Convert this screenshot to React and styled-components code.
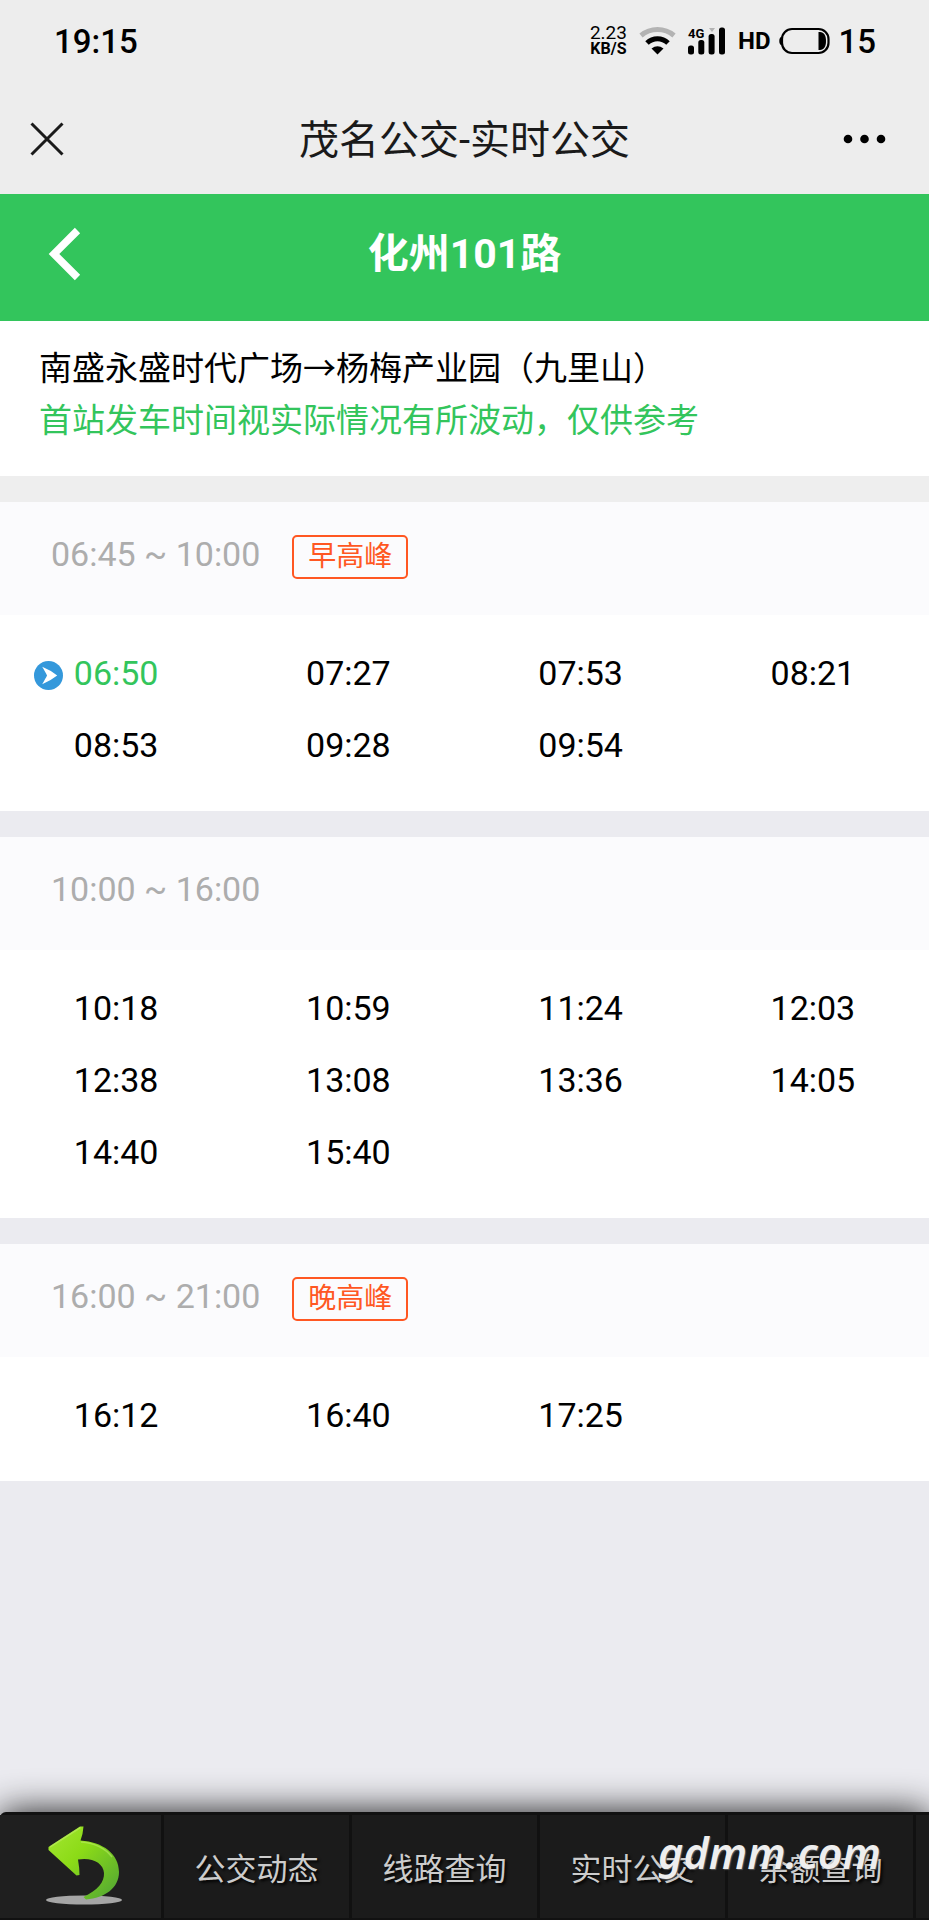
// react 관련 라이브러리
import React from 'react';
import styled, { createGlobalStyle, css } from 'styled-components';

// style 관련
const color = {
  green: '#33c55c',
  orange: '#ff5722',
  blue: '#3498db',
  bar: '#ededed',
  page: '#ebebf0',
  head: '#fbfbfd',
  gray: '#adadad',
  nav: '#1b1b1b',
  navLine: '#111111',
};

const GlobalStyle = createGlobalStyle`
  * {
    box-sizing: border-box;
  }
  body {
    margin: 0;
    background-color: ${color.page};
    color: #000;
    font-family: Roboto, 'Noto Sans CJK SC', sans-serif;
  }
  button {
    padding: 0;
    border: 0;
    background: none;
    cursor: pointer;
  }
  svg {
    display: block;
    overflow: visible;
  }
`;

const vCenter = css`
  display: flex;
  align-items: center;
`;

const Page = styled.div`
  display: flex;
  flex-direction: column;
  min-height: 100vh;
  overflow: hidden;
`;

// status bar
const StatusBar = styled.div`
  ${vCenter}
  justify-content: space-between;
  height: 84px;
  padding: 0 53px 2px 54px;
  background-color: ${color.bar};
  font-size: 33px;
  font-weight: 500;
`;

const StatusIcons = styled.div`
  ${vCenter}
  gap: 12px;
`;

const Speed = styled.div`
  font-size: 19px;
  font-weight: 400;
  line-height: 16px;
  text-align: center;

  strong {
    display: block;
    font-size: 16px;
    font-weight: 700;
    line-height: 16px;
  }
`;

const Hd = styled.span`
  font-family: 'Liberation Sans Narrow', Roboto, sans-serif;
  font-size: 24px;
  font-weight: 700;
`;

const Battery = styled.span`
  ${vCenter}
  gap: 8px;
`;

// title bar
const TitleBar = styled.header`
  display: grid;
  grid-template-columns: 1fr auto 1fr;
  align-items: center;
  height: 110px;
  padding: 0 42px 0 30px;
  background-color: ${color.bar};
  color: #1a1a1a;

  button:last-child {
    justify-self: end;
  }
`;

const AppTitle = styled.div`
  padding: 4px 0 0 12px;
  font-size: 40px;
  line-height: 56px;
`;

// line header
const LineHeader = styled.div`
  display: grid;
  grid-template-columns: 1fr auto 1fr;
  align-items: center;
  height: 127px;
  padding: 0 48px 8px;
  background-color: ${color.green};
  color: #fff;
`;

const LineTitle = styled.h1`
  margin: 0;
  font-size: 41px;
  font-weight: 700;
  line-height: 60px;
`;

const RouteInfo = styled.div`
  padding: 22px 39px 29px;
  border-bottom: 26px solid #eee;
  background-color: #fff;
  font-size: 33px;
  line-height: 52px;
  box-sizing: content-box;

  p {
    margin: 0;
  }
  p + p {
    color: ${color.green};
  }
`;

// time table
const Period = styled.section`
  background-color: #fff;

  & + & {
    margin-top: 26px;
  }
`;

const PeriodHead = styled.div`
  display: flex;
  align-items: flex-start;
  gap: 32px;
  min-height: 113px;
  padding: 33px 51px 0;
  background-color: ${color.head};
`;

const PeriodRange = styled.h2`
  margin: 0;
  color: ${color.gray};
  font-size: 34px;
  font-weight: 400;
  line-height: 38px;
`;

const Badge = styled.span`
  padding: 0 14px;
  border: 2px solid ${color.orange};
  border-radius: 5px;
  color: ${color.orange};
  font-size: 28px;
  line-height: 40px;
`;

const TimeList = styled.ul`
  display: grid;
  grid-template-columns: repeat(4, 1fr);
  margin: 0;
  padding: 22px 0 30px;
  list-style: none;
`;

const TimeItem = styled.li`
  display: grid;
  grid-template-columns: 1fr auto 1fr;
  align-items: center;
  font-size: 34px;
  line-height: 72px;

  svg {
    justify-self: end;
    margin: 4px 11px 0 0;
  }
  time {
    grid-column: 2;
    color: ${({ $next }) => ($next ? color.green : '#000')};
  }
`;

// bottom navigation
const BottomNav = styled.nav`
  position: relative;
  display: flex;
  height: 108px;
  margin-top: auto;
  border-top: 3px solid ${color.navLine};
  border-bottom: 2px solid ${color.navLine};
  border-radius: 6px 0 0 0;
  background-color: ${color.nav};
  box-shadow: 0 0 36px rgba(0, 0, 0, 0.9);
`;

const NavBack = styled.button`
  ${vCenter}
  flex: none;
  justify-content: center;
  width: 164px;
  padding: 0 0 3px 5px;
  border-right: 3px solid ${color.navLine};
  background-color: #1f1f1f;
`;

const NavLink = styled.a`
  ${vCenter}
  flex: none;
  justify-content: center;
  width: 188px;
  border-right: 3px solid ${color.navLine};
  color: #ccc;
  font-size: 31px;
  text-decoration: none;
  text-shadow: 2px 2px 3px #000;
`;

const Watermark = styled.span`
  position: absolute;
  right: 48px;
  bottom: 35px;
  color: #eee;
  font-family: 'Noto Sans', 'Open Sans', sans-serif;
  font-size: 43px;
  font-style: italic;
  font-weight: 600;
  line-height: 60px;
  text-shadow: 1px 1px 1px #555;
`;

const periods = [
  {
    range: '06:45 ~ 10:00',
    badge: '早高峰',
    times: ['06:50', '07:27', '07:53', '08:21', '08:53', '09:28', '09:54'],
  },
  {
    range: '10:00 ~ 16:00',
    times: ['10:18', '10:59', '11:24', '12:03', '12:38', '13:08', '13:36', '14:05', '14:40', '15:40'],
  },
  {
    range: '16:00 ~ 21:00',
    badge: '晚高峰',
    times: ['16:12', '16:40', '17:25'],
  },
];

const nextTime = '06:50';

const navItems = ['公交动态', '线路查询', '实时公交', '余额查询'];

function WifiIcon() {
  return (
    <svg width="37" height="28" viewBox="0 0 37 28" fill="none">
      <path d="M2 8.5C11.5 0.5 25.5 0.5 35 8.5" stroke="#b3b3b3" strokeWidth="5" />
      <path d="M8 16C14 10.2 23 10.2 29 16" stroke="#000" strokeWidth="5" />
      <path d="M12.5 21.5Q18.5 17 24.5 21.5L18.5 27.5Z" fill="#000" />
    </svg>
  );
}

function SignalIcon() {
  return (
    <svg width="38" height="28" viewBox="0 0 38 28">
      <text x="0" y="11" fontSize="13" fontWeight="700" fontFamily="'Liberation Sans Narrow', Roboto, sans-serif">
        4G
      </text>
      <path d="M21 1H27L24 5Z" fill="#b3b3b3" />
      <rect x="0" y="18.5" width="6" height="9" rx="2.5" />
      <rect x="10.3" y="13" width="6" height="14.5" rx="2.5" />
      <rect x="20.6" y="7" width="6" height="20.5" rx="2.5" />
      <rect x="31" y="0.5" width="6" height="27" rx="2.5" />
    </svg>
  );
}

function BatteryIcon() {
  return (
    <svg width="52" height="28" viewBox="0 0 52 28">
      <path d="M3.5 9.5C0.5 11 0.5 17 3.5 18.5Z" />
      <rect x="4" y="2" width="46.5" height="24" rx="10" fill="none" stroke="#000" strokeWidth="2.2" />
      <path d="M40.5 5H42C46 5 48 8.5 48 14S46 23 42 23H40.5Z" />
    </svg>
  );
}

function NextIcon() {
  return (
    <svg width="29" height="29" viewBox="0 0 30 30">
      <circle cx="15" cy="15" r="15" fill={color.blue} />
      <path d="M8.5 6Q17 9.5 24 15Q17 20.500 8.500 24Q12 18 13.500 15Q12 12 8.500 6Z" fill="#fff" />
    </svg>
  );
}

function ReturnIcon() {
  return (
    <svg width="80" height="80" viewBox="0 0 80 80">
      <defs>
        <linearGradient id="leaf" x1="0" y1="0" x2="1" y2="1">
          <stop offset="0" stopColor="#a4e632" />
          <stop offset="0.4" stopColor="#8cdb17" />
          <stop offset="1" stopColor="#4ea336" />
        </linearGradient>
      </defs>
      <ellipse cx="41" cy="75" rx="38" ry="4.5" fill="#a5a5a5" />
      <path
        d="M37 1.5L40.5 1.5Q40 9 37.5 15.5C60 17 76 29 76 47C76 63 62 73 43 74.5L40.5 72C55 65 61.5 57 61 48C60.5 38 49 32 35 34.5Q36.5 43 36.5 50L33.5 50.5L5.5 25V22Z"
        fill="url(#leaf)"
      />
      <path
        d="M7 22L37.5 2.5M38 17C50 18 62 23 69 32"
        fill="none"
        stroke="#c4ef70"
        strokeOpacity="0.5"
        strokeWidth="1.5"
      />
    </svg>
  );
}

function Header() {
  return (
    <>
      <StatusBar>
        <span>19:15</span>
        <StatusIcons>
          <Speed>
            2.23
            <strong>KB/S</strong>
          </Speed>
          <WifiIcon />
          <SignalIcon />
          <Battery>
            <Hd>HD</Hd>
            <BatteryIcon />
            15
          </Battery>
        </StatusIcons>
      </StatusBar>
      <TitleBar>
        <button type="button" aria-label="关闭">
          <svg width="34" height="34" viewBox="0 0 34 34" fill="none" stroke="#1a1a1a" strokeWidth="3">
            <path d="M1.5 1.5L32.5 32.5M32.5 1.5L1.5 32.5" />
          </svg>
        </button>
        <AppTitle>茂名公交-实时公交</AppTitle>
        <button type="button" aria-label="更多">
          <svg width="44" height="10" viewBox="0 0 44 10">
            <circle cx="5" cy="5" r="4.3" />
            <circle cx="21.5" cy="5" r="4.3" />
            <circle cx="38" cy="5" r="4.3" />
          </svg>
        </button>
      </TitleBar>
      <LineHeader>
        <button type="button" aria-label="返回">
          <svg width="34" height="54" viewBox="0 0 34 54" fill="none" stroke="#fff" strokeWidth="7.5">
            <path d="M29.5 3.5L6 27L29.5 50.5" />
          </svg>
        </button>
        <LineTitle>化州101路</LineTitle>
      </LineHeader>
    </>
  );
}

function App() {
  return (
    <>
      <GlobalStyle />
      <Page lang="zh-CN">
        <Header />
        <RouteInfo>
          <p>南盛永盛时代广场→杨梅产业园（九里山）</p>
          <p>首站发车时间视实际情况有所波动，仅供参考</p>
        </RouteInfo>
        <main>
          {periods.map(({ range, badge, times }) => (
            <Period key={range}>
              <PeriodHead>
                <PeriodRange>{range}</PeriodRange>
                {badge && <Badge>{badge}</Badge>}
              </PeriodHead>
              <TimeList>
                {times.map((time) => (
                  <TimeItem key={time} $next={time === nextTime}>
                    {time === nextTime && <NextIcon />}
                    <time>{time}</time>
                  </TimeItem>
                ))}
              </TimeList>
            </Period>
          ))}
        </main>
        <BottomNav>
          <NavBack type="button" aria-label="返回上页">
            <ReturnIcon />
          </NavBack>
          {navItems.map((item) => (
            <NavLink key={item} href="#">
              {item}
            </NavLink>
          ))}
          <Watermark>gdmm.com</Watermark>
        </BottomNav>
      </Page>
    </>
  );
}

export default App;
